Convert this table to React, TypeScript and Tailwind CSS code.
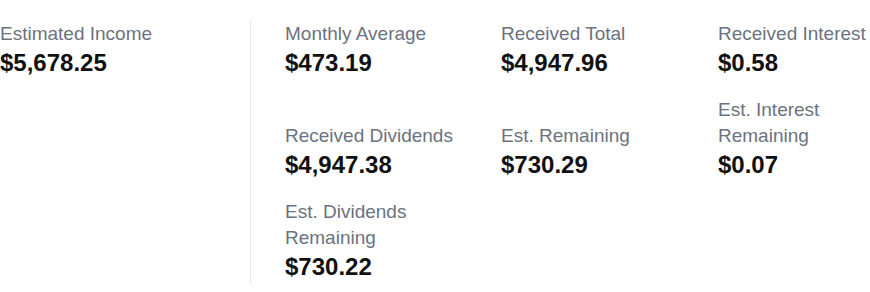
import React from "react";

type Stat = { label: string; value: string };

const stats: Stat[] = [
  { label: "Monthly Average", value: "$473.19" },
  { label: "Received Total", value: "$4,947.96" },
  { label: "Received Interest", value: "$0.58" },
  { label: "Received Dividends", value: "$4,947.38" },
  { label: "Est. Remaining", value: "$730.29" },
  { label: "Est. Interest Remaining", value: "$0.07" },
  { label: "Est. Dividends Remaining", value: "$730.22" },
];

function StatItem({ label, value }: Stat) {
  return (
    <div className="flex flex-col">
      <div className="max-w-[200px] text-[19px] leading-[26px] text-[#6b7280]">{label}</div>
      <div className="text-[24px] leading-[32px] font-semibold text-[#111111]">{value}</div>
    </div>
  );
}

export default function App() {
  return (
    <div
      className="w-[870px] h-[292px] bg-white overflow-hidden pt-[21px]"
      style={{ fontFamily: '"Liberation Sans", Arial, sans-serif' }}
    >
      <div className="flex">
        <div className="w-[251px] shrink-0 border-r border-[#e3e4e6]">
          <StatItem label="Estimated Income" value="$5,678.25" />
        </div>
        <div className="flex-1 pl-[34px] grid grid-cols-[216px_217px_1fr] gap-y-[18px] items-end">
          {stats.map((s) => (
            <StatItem key={s.label} label={s.label} value={s.value} />
          ))}
        </div>
      </div>
    </div>
  );
}
